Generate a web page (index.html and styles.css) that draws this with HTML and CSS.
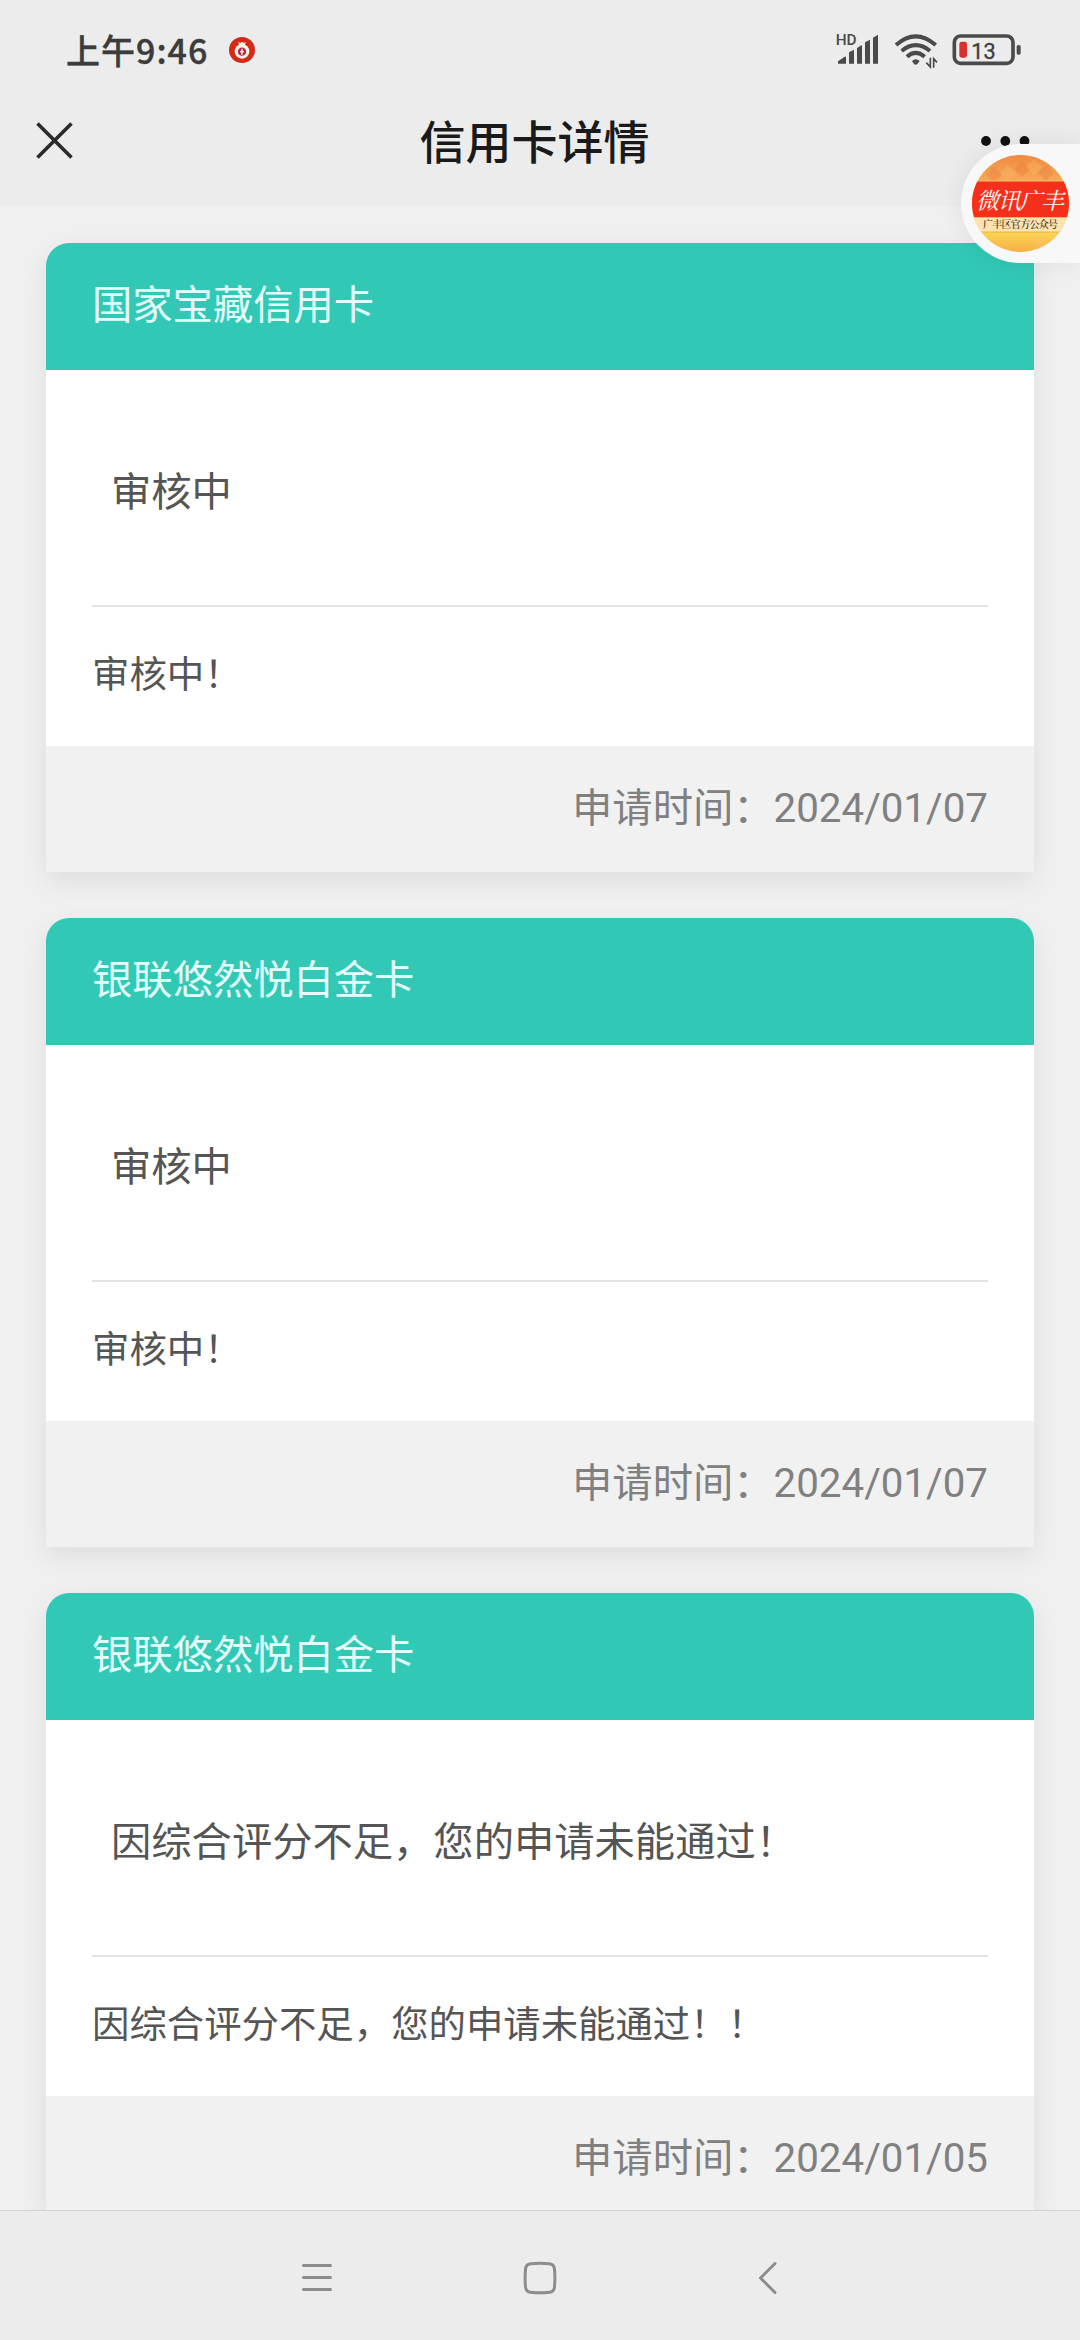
FILE: index.html
```html
<!DOCTYPE html>
<html lang="zh-CN">
  <head>
    <meta charset="UTF-8" />
    <meta name="viewport" content="width=device-width, initial-scale=1.0" />
    <title>信用卡详情</title>
    <link rel="stylesheet" href="styles.css">
  </head>
  <body>
    <div class="status-bar">
      <span class="time">上午9:46</span>
      <svg class="money" viewBox="0 0 78 78">
        <circle cx="39" cy="39" r="39" fill="#d42a1a" />
        <path d="M27 15l7 3 5-4 5 4 7-3-5 11H32z" fill="#fff5e6" />
        <circle cx="39" cy="43" r="22" fill="#fff5e6" />
        <circle cx="39" cy="44" r="12.500" fill="#b0264a" />
        <path d="M39 35v18M33 44h12" stroke="#fff5e6" stroke-width="4" />
      </svg>
      <div class="status-icons">
        <svg class="signal" viewBox="108 94 132 114">
          <text x="107" y="135" class="hd">HD</text>
          <path d="M114 192v-7l20-14q4-2 4 2v19zM147 192v-34l15-8v42zM171 192v-47l15-9v56zM195 192v-64l15-8v72zM219 192v-78l15-9v87z" fill="#4a4a4a" />
        </svg>
        <svg class="wifi" viewBox="280 94 132 114">
          <g fill="none" stroke="#4a4a4a" stroke-width="12">
            <path d="M286 136Q345 84 405 136" />
            <path d="M303 154Q345 119 388 154" />
            <path d="M319 171Q345 148 372 171" />
          </g>
          <path d="M334 184q11-11 23 0l-7 9q-5 4-10 0z" fill="#4a4a4a" />
          <path d="M389 174v28l-12-13M399 204v-27l10 11" fill="none" stroke="#4a4a4a" stroke-width="5" />
        </svg>
        <svg class="battery" viewBox="454 94 210 114">
          <rect x="461" y="109" width="176" height="82" rx="19" fill="none" stroke="#4a4a4a" stroke-width="11" />
          <rect x="648" y="136" width="12" height="29" rx="5" fill="#4a4a4a" />
          <rect x="476" y="126" width="23" height="48" rx="7" fill="#d92f2f" />
          <text x="512" y="177" class="level">13</text>
        </svg>
      </div>
    </div>

    <div class="header">
      <svg class="close" viewBox="0 0 37 37">
        <path d="M1.500 1.500l34 34M35.500 1.500l-34 34" stroke="#2a2a2a" stroke-width="3.600" />
      </svg>
      <h1>信用卡详情</h1>
      <svg class="more" viewBox="0 0 49 10">
        <circle cx="5" cy="5" r="4.900" />
        <circle cx="24.300" cy="5" r="4.900" />
        <circle cx="43.500" cy="5" r="4.900" />
      </svg>
    </div>

    <div class="content">
      <div class="card">
        <div class="card-head">国家宝藏信用卡</div>
        <div class="card-status">审核中</div>
        <div class="card-desc">审核中！</div>
        <div class="card-foot">申请时间：2024/01/07</div>
      </div>
      <div class="card">
        <div class="card-head">银联悠然悦白金卡</div>
        <div class="card-status">审核中</div>
        <div class="card-desc">审核中！</div>
        <div class="card-foot">申请时间：2024/01/07</div>
      </div>
      <div class="card">
        <div class="card-head">银联悠然悦白金卡</div>
        <div class="card-status">因综合评分不足，您的申请未能通过！</div>
        <div class="card-desc">因综合评分不足，您的申请未能通过！！</div>
        <div class="card-foot">申请时间：2024/01/05</div>
      </div>
    </div>

    <div class="nav">
      <svg viewBox="0 0 36 36">
        <path d="M6.500 5.500h27M6.500 17.500h27M6.500 29.500h27" />
      </svg>
      <svg viewBox="0 0 36 36">
        <path d="M8.500 3.800Q18 2.600 27.500 3.800Q31.800 4.400 32.400 8.500Q33.400 18 32.400 27.500Q31.800 31.800 27.500 32.300Q18 33.400 8.500 32.300Q4.200 31.800 3.600 27.500Q2.600 18 3.600 8.500Q4.200 4.400 8.500 3.800z" />
      </svg>
      <svg viewBox="0 0 36 36">
        <path d="M28 3.500L13.500 18 28 32.500" />
      </svg>
    </div>

    <!-- floating account window docked to the right edge -->
    <div class="float">
      <svg viewBox="0 0 97 97">
        <defs>
          <linearGradient id="gold" x1="0" y1="0" x2="0" y2="1">
            <stop offset="0" stop-color="#f08a40" />
            <stop offset="0.280" stop-color="#f5ac58" />
            <stop offset="0.800" stop-color="#fbd452" />
            <stop offset="1" stop-color="#f6b048" />
          </linearGradient>
          <clipPath id="round"><circle cx="48.500" cy="48.500" r="48.500" /></clipPath>
        </defs>
        <g clip-path="url(#round)">
          <rect width="97" height="97" fill="url(#gold)" />
          <path d="M14 20l8-8 8 8-8 8zM42 14l8-8 8 8-8 8zM66 18l8-8 8 8-8 8z" fill="#e8703a" opacity="0.300" />
          <path d="M28 18l8-8 8 8-8 8zM54 12l8-8 8 8-8 8zM60 86l8-8 8 8-8 8z" fill="#fbc170" opacity="0.300" />
          <rect y="26" width="97" height="36.500" fill="#f5301a" />
          <rect y="62.500" width="97" height="14.500" fill="#fce3ae" />
          <path d="M0 26h97" stroke="#f8c060" stroke-width="1" />
          <path d="M0 77h97" stroke="#d9a24a" stroke-width="0.700" />
        </g>
        <text x="4" y="54" class="brand" textLength="88">微讯广丰</text>
        <text x="11" y="73" class="sub" textLength="75">广丰区官方公众号</text>
      </svg>
    </div>
  </body>
</html>
```

FILE: styles.css
```css
* {
  margin: 0;
  padding: 0;
  box-sizing: border-box;
}
body {
  position: relative;
  display: flex;
  flex-direction: column;
  width: 1080px;
  height: 2340px;
  overflow: hidden;
  background-color: #f0f0f0;
  font-family: Roboto, "Noto Sans CJK SC", sans-serif;
}
svg {
  display: block;
  flex-shrink: 0;
}

/* status bar */
.status-bar {
  display: flex;
  align-items: center;
  height: 100px;
  padding: 0 58px 0 66px;
  background-color: #ececec;
}
.time {
  font-family: "Noto Sans CJK SC", sans-serif;
  font-size: 34px;
  font-weight: 500;
  line-height: 50px;
  letter-spacing: 1px;
  color: #3c3c3c;
  -webkit-text-stroke: 0.4px #3c3c3c;
}
.money {
  width: 26px;
  height: 26px;
  margin-left: 21px;
}
.status-icons {
  display: flex;
  gap: 14px;
  margin-left: auto;
}
.signal,
.wifi {
  width: 44px;
  height: 38px;
}
.battery {
  width: 70px;
  height: 38px;
}
.hd {
  font-size: 46px;
  font-weight: 500;
  fill: #4a4a4a;
}
.level {
  font-size: 65px;
  fill: #3c3c3c;
  font-weight: 400;
  stroke: #3c3c3c;
  stroke-width: 1px;
}

/* title bar */
.header {
  display: flex;
  align-items: center;
  justify-content: space-between;
  height: 106px;
  padding: 0 50px 25px 36px;
  background-color: #ececec;
}
.close {
  width: 37px;
  height: 37px;
}
.header h1 {
  margin-left: 15px;
  font-size: 46px;
  font-weight: 500;
  line-height: 60px;
  padding-top: 4px;
  color: #1a1a1a;
}
.more {
  width: 49px;
  height: 10px;
  fill: #111;
}

/* cards */
.content {
  flex: 1;
  min-height: 0;
  overflow: hidden;
  padding: 37px 46px 0;
}
.card {
  margin-bottom: 46px;
  border-radius: 23px 23px 0 0;
  background-color: #fff;
  box-shadow: 0 9px 28px rgba(0, 0, 0, 0.08);
}
.card-head {
  height: 127px;
  line-height: 125px;
  padding: 0 46px;
  border-radius: 23px 23px 0 0;
  background-color: #32c8b6;
  color: #e2fffb;
  font-size: 40.3px;
}
.card-status {
  height: 237px;
  margin: 0 46px;
  padding: 10px 19px 0;
  line-height: 225px;
  border-bottom: 2px solid #e2e2e2;
  color: #555;
  font-size: 40.3px;
}
.card-desc {
  height: 139px;
  line-height: 137px;
  padding: 0 46px;
  color: #555;
  font-size: 37.4px;
}
.card-foot {
  height: 126px;
  line-height: 126px;
  padding: 0 46px;
  background-color: #f1f1f1;
  color: #808080;
  font-size: 40.3px;
  text-align: right;
}

/* system navigation */
.nav {
  display: grid;
  grid-template-columns: repeat(3, 225px);
  justify-content: center;
  justify-items: center;
  align-items: center;
  height: 130px;
  padding-top: 5px;
  border-top: 1px solid #d2d2d2;
  background-color: #ececec;
}
.nav svg {
  width: 36px;
  height: 36px;
  fill: none;
  stroke: #8c8c8c;
  stroke-width: 3;
  stroke-linecap: round;
  stroke-linejoin: round;
}

.float {
  position: absolute;
  top: 144px;
  right: 0;
  width: 119px;
  height: 119px;
  padding: 11px;
  border-radius: 60px 0 0 60px;
  background-color: #f8f8f8;
  box-shadow: 0 0 26px rgba(0, 0, 0, 0.08);
}
.float svg {
  width: 97px;
  height: 97px;
}
.brand {
  font-family: "Noto Serif CJK SC", "Noto Sans CJK SC", serif;
  font-size: 23px;
  font-style: italic;
  fill: #fff;
}
.sub {
  font-family: "Noto Serif CJK SC", "Noto Sans CJK SC", serif;
  font-size: 10px;
  font-weight: 500;
  fill: #3a2818;
}
```
